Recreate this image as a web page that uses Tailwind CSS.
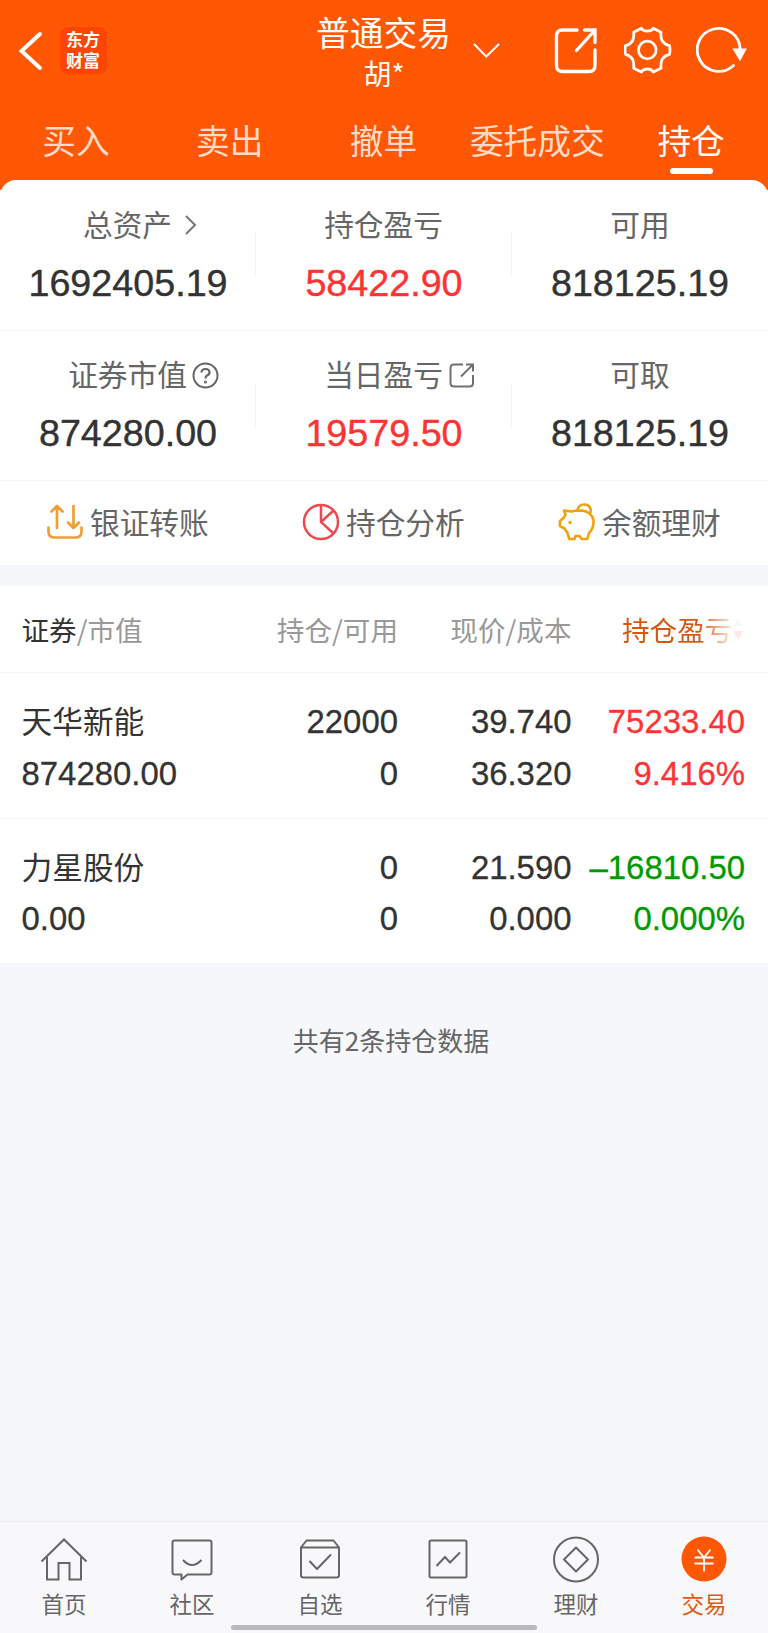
<!DOCTYPE html>
<html lang="zh-CN">
<head>
<meta charset="utf-8">
<title>普通交易</title>
<script src="https://cdn.jsdelivr.net/npm/@tailwindcss/browser@4"></script>
</head>
<body class="w-[768px] h-[1633px] overflow-hidden bg-[#f6f7fa] font-['Noto_Sans_CJK_SC',sans-serif] text-[#333]">
<div class="flex h-[1633px] flex-col">

<header class="h-[190px] shrink-0 bg-[#ff5704] text-white">
  <div class="grid h-[108px] grid-cols-3">
    <div class="flex pt-[27px] pl-[18px]">
      <svg class="mt-[3px] h-11 w-[26px]" viewBox="0 0 26 44" fill="none" stroke="#fff" stroke-width="4" stroke-linecap="round"><path d="M22 4 3.500 21 22 38"/></svg>
      <div class="ml-[15.500px] h-[47px] w-[47px] rounded-lg bg-[#ff4504] pt-[2px] text-center text-[17px] leading-[20.500px] font-bold">东方<br>财富</div>
    </div>
    <div class="relative flex flex-col items-center">
      <span class="mt-[12px] -ml-px text-[33.7px] leading-[40px] whitespace-nowrap">普通交易</span>
      <span class="mt-[1px] text-[28px] leading-[40px]">胡*</span>
      <svg class="absolute top-[41px] left-[216px] h-5 w-7" viewBox="0 0 28 20" fill="none" stroke="#fff" stroke-width="2"><path d="M2 3 14.300 15.500 27 3"/></svg>
    </div>
    <div class="flex pt-[26px] pl-[41px]">
      <svg class="h-12 w-[46px]" viewBox="0 0 46 48" fill="none" stroke="#fff" stroke-width="3.300" stroke-linecap="round"><path d="M24 4H9.500Q3.500 4 3.500 10V39.500Q3.500 45.500 9.500 45.500H36Q42 45.500 42 39.500V24M31.500 4H42V16.500M42 4 23.500 24.500"/></svg>
      <svg class="ml-[25px] h-12 w-12" viewBox="0 0 48 48" fill="none" stroke="#fff" stroke-width="2.800" stroke-linejoin="round"><path d="M17.300 2.300Q19 5.200 23.300 5.200T29.300 2.300L37 6.300Q36.500 11 38 14.500Q40.500 18.500 45.500 19.700Q46.500 24 45.500 28.300Q40.500 29.500 38 33.500Q36.500 37.500 37 42.300L29.300 46Q27.500 43 23.300 43T17.300 46L9.700 42.300Q10.200 37.500 8.700 33.500Q6.500 29.500 1.500 28.300Q.5 24 1.500 19.700Q6.500 18.500 8.700 14.500Q10.200 11 9.700 6.300Z"/><circle cx="23.300" cy="24" r="8.800"/></svg>
      <svg class="ml-6 h-12 w-[52px]" viewBox="0 0 52 48" fill="none" stroke="#fff" stroke-width="2.800" stroke-linecap="round"><path d="M37.500 39.500A21.500 21.500 0 1 1 44.200 23"/><path d="M37.500 23H49.800L44 34Z" fill="#fff" stroke-width="1.200"/></svg>
    </div>
  </div>
  <nav class="-ml-px grid grid-cols-5 text-center text-[33.7px] leading-[63px] whitespace-nowrap text-[#ffdcc8]">
    <span>买入</span><span>卖出</span><span>撤单</span><span>委托成交</span>
    <span class="relative text-white">持仓<i class="absolute bottom-[-3px] left-[56px] h-[6.500px] w-[43px] rounded-full bg-white"></i></span>
  </nav>
</header>

<section class="relative z-10 -mt-[10px] h-[385px] shrink-0 rounded-t-[16px] bg-white text-[29.700px] text-[#666]">
  <div class="grid h-[150px] grid-cols-3 text-center">
    <div class="flex flex-col pt-[24px]">
      <span class="relative -ml-px leading-[40px]">总资产<svg class="absolute top-[10px] left-[184px] h-6 w-4" viewBox="0 0 16 24" fill="none" stroke="#777" stroke-width="2"><path d="M3 2 12 11 3 20"/></svg></span>
      <b class="mt-[19px] font-['Liberation_Sans',sans-serif] text-[37.700px] leading-[40px] font-normal text-[#333] [-webkit-text-stroke:0.4px]">1692405.19</b>
    </div>
    <div class="relative flex flex-col pt-[24px]"><i class="absolute top-[53px] left-[-1px] h-[43px] w-px bg-[#f5f5f7]"></i><i class="absolute top-[53px] right-0 h-[43px] w-px bg-[#f5f5f7]"></i>
      <span class="-ml-px leading-[40px]">持仓盈亏</span>
      <b class="mt-[19px] font-['Liberation_Sans',sans-serif] text-[37.700px] leading-[40px] font-normal text-[#ff3333] [-webkit-text-stroke:0.4px]">58422.90</b>
    </div>
    <div class="flex flex-col pt-[24px]">
      <span class="leading-[40px]">可用</span>
      <b class="mt-[19px] font-['Liberation_Sans',sans-serif] text-[37.700px] leading-[40px] font-normal text-[#333] [-webkit-text-stroke:0.4px]">818125.19</b>
    </div>
  </div>
  <div class="grid h-[150px] grid-cols-3 border-t border-[#f5f5f7] text-center">
    <div class="flex flex-col pt-[23px]">
      <span class="relative -ml-px leading-[40px]">证券市值<svg class="absolute top-[8px] left-[193px] h-[27px] w-[27px]" viewBox="0 0 27 27" fill="none" stroke="#666" stroke-width="2"><circle cx="13.500" cy="13.500" r="12"/><path d="M9.500 10.500Q9.500 7 13.500 7T17.500 10.500Q17.500 12.500 15 13.500Q13.500 14.200 13.500 16.500" stroke-width="2.200"/><circle cx="13.500" cy="20" r=".6"/></svg></span>
      <b class="mt-[19px] font-['Liberation_Sans',sans-serif] text-[37.700px] leading-[40px] font-normal text-[#333] [-webkit-text-stroke:0.4px]">874280.00</b>
    </div>
    <div class="relative flex flex-col pt-[23px]"><i class="absolute top-[52px] left-[-1px] h-[46px] w-px bg-[#f5f5f7]"></i><i class="absolute top-[52px] right-0 h-[46px] w-px bg-[#f5f5f7]"></i>
      <span class="relative -ml-px leading-[40px]">当日盈亏<svg class="absolute top-[8px] left-[193px] h-[27px] w-[27px]" viewBox="0 0 27 27" fill="none" stroke="#707070" stroke-width="2"><path d="M15 2.500H6Q2.500 2.500 2.500 6V21Q2.500 24.500 6 24.500H21.500Q25 24.500 25 21V13M18 2.500H25V9.500M25 2.500 13 14.500"/></svg></span>
      <b class="mt-[19px] font-['Liberation_Sans',sans-serif] text-[37.700px] leading-[40px] font-normal text-[#ff3333] [-webkit-text-stroke:0.4px]">19579.50</b>
    </div>
    <div class="flex flex-col pt-[23px]">
      <span class="leading-[40px]">可取</span>
      <b class="mt-[19px] font-['Liberation_Sans',sans-serif] text-[37.700px] leading-[40px] font-normal text-[#333] [-webkit-text-stroke:0.4px]">818125.19</b>
    </div>
  </div>
  <div class="grid h-[85px] grid-cols-3 border-t border-[#f5f5f7] leading-[82px]">
    <div class="flex pl-[46px]">
      <svg class="mt-[22px] mr-[6px] h-10 w-[38px]" viewBox="0 0 38 40" fill="none" stroke="#eea036" stroke-width="2.700" stroke-linecap="round" stroke-linejoin="round"><path d="M2.500 24.500V28.500Q2.500 34.500 8.500 34.500H29.500Q35.500 34.500 35.500 28.500V24.500M11 25V3M5.500 8.500 11 3 16.500 8.500M27.500 3V25M22 19.500 27.500 25 33 19.500"/></svg><span>银证转账</span>
    </div>
    <div class="flex pl-[46px]">
      <svg class="mt-[22px] mr-[6px] h-10 w-[38px]" viewBox="0 0 38 40" fill="none" stroke="#ec4a52" stroke-width="2.500"><circle cx="19" cy="19" r="17"/><path d="M19 2V19L31 30M19 19 31 8"/></svg><span>持仓分析</span>
    </div>
    <div class="flex pl-[46px]">
      <svg class="mt-[22px] mr-[6px] h-10 w-[38px]" viewBox="0 0 38 40" fill="none" stroke="#f2a20c" stroke-width="2.600" stroke-linejoin="round"><path d="M6 7.500 13.500 8.500Q17 7.500 24 7.500Q33 8.500 35.500 17Q36 25.500 31 30L29.300 36H23.700L21.500 33H17.500L16.500 36H11.300L9.300 29.500L6.500 25.500L2 23V18L6 14.500L7.500 11.500Z"/><path d="M19.500 7.500Q20.500 1.500 26 1.500T32.700 6.500Q33 9 31.500 11.500"/><circle cx="12" cy="19.500" r="1.100" fill="#f2a20c" stroke-width="1.200"/></svg><span>余额理财</span>
    </div>
  </div>
</section>

<main class="mt-[21px] shrink-0 bg-white">
  <div class="grid h-[87px] grid-cols-[225px_173px_173.5px_173.5px] border-b border-[#f5f5f7] text-right text-[27.600px] leading-[86px] whitespace-nowrap text-[#999]">
    <span class="pl-[21.500px] text-left"><span class="text-[#333]">证券</span>/市值</span>
    <span>持仓/可用</span><span>现价/成本</span>
    <div class="flex items-center pl-[50.500px]"><span class="bg-linear-to-r from-[#d9560f] from-70% to-[#fbe7dc] to-100% bg-clip-text text-transparent">持仓盈亏</span>
      <svg class="h-6 w-3 shrink-0" viewBox="0 0 12 24"><path d="M1 9 6 1 11 9Z" fill="#faf7f8"/><path d="M1 14 6 23 11 14Z" fill="#fdebe3"/></svg></div>
  </div>
  <div class="grid h-[145.500px] grid-cols-[225px_173px_173.5px_173.5px] content-start border-b border-[#f5f5f7] pt-[23px] text-right font-['Liberation_Sans',sans-serif] text-[32.900px] leading-[51.500px] whitespace-nowrap [-webkit-text-stroke:0.3px]">
    <span class="h-[51.500px] pl-[21.500px] text-left font-['Noto_Sans_CJK_SC',sans-serif] text-[30.700px] leading-[48px] [-webkit-text-stroke:0]">天华新能</span><span>22000</span><span>39.740</span><span class="text-[#ff3333]">75233.40</span>
    <span class="pl-[21.500px] text-left">874280.00</span><span>0</span><span>36.320</span><span class="text-[#ff3333]">9.416%</span>
  </div>
  <div class="grid h-[144.500px] grid-cols-[225px_173px_173.5px_173.5px] content-start pt-[23px] text-right font-['Liberation_Sans',sans-serif] text-[32.900px] leading-[51.500px] whitespace-nowrap [-webkit-text-stroke:0.3px]">
    <span class="h-[51.500px] pl-[21.500px] text-left font-['Noto_Sans_CJK_SC',sans-serif] text-[30.700px] leading-[48px] [-webkit-text-stroke:0]">力星股份</span><span>0</span><span>21.590</span><span class="text-[#009900]">–16810.50</span>
    <span class="pl-[21.500px] text-left">0.00</span><span>0</span><span>0.000</span><span class="text-[#009900]">0.000%</span>
  </div>
</main>

<p class="mt-[56.500px] pl-[14px] text-center text-[26px] leading-[40px] text-[#666]">共有2条持仓数据</p>

<footer class="relative mt-auto h-[112px] shrink-0 border-t border-[#ededf0] bg-[#f8f8fb] text-[22.500px] text-[#666]">
  <div class="grid grid-cols-6 pt-[12px]">
    <div class="flex flex-col items-center"><svg class="h-[50px] w-[50px]" viewBox="0 0 50 50" fill="none" stroke="#666" stroke-width="2"><path d="M2.500 27.500 25 5.500 47.500 27.500M8 23V45.500H19.500V29H30.500V45.500H42V23"/></svg><span class="mt-[4px] leading-[30px]">首页</span></div>
    <div class="flex flex-col items-center"><svg class="h-[50px] w-[50px]" viewBox="0 0 50 50" fill="none" stroke="#666" stroke-width="2" stroke-linejoin="round"><path d="M7.500 6.500H42.500Q44.500 6.500 44.500 8.500V38.500Q44.500 40.500 42.500 40.500H20.500L14.500 45.500V40.500H7.500Q5.500 40.500 5.500 38.500V8.500Q5.500 6.500 7.500 6.500ZM16 26Q25 36 34.500 26"/></svg><span class="mt-[4px] leading-[30px]">社区</span></div>
    <div class="flex flex-col items-center"><svg class="h-[50px] w-[50px]" viewBox="0 0 50 50" fill="none" stroke="#666" stroke-width="2" stroke-linejoin="round"><path d="M6 13.500 11.500 6.500H38.500L44 13.500V41Q44 43.500 41.500 43.500H8.500Q6 43.500 6 41ZM6 13.500H44M14.500 27 22 35 36 20.500"/></svg><span class="mt-[4px] leading-[30px]">自选</span></div>
    <div class="flex flex-col items-center"><svg class="h-[50px] w-[50px]" viewBox="0 0 50 50" fill="none" stroke="#666" stroke-width="2"><rect x="6.500" y="6.500" width="37" height="37" rx="1.500"/><path d="M13.500 32 22 23 27 28.500 37 18.500"/></svg><span class="mt-[4px] leading-[30px]">行情</span></div>
    <div class="flex flex-col items-center"><svg class="h-[50px] w-[50px]" viewBox="0 0 50 50" fill="none" stroke="#666" stroke-width="2" stroke-linejoin="round"><circle cx="25" cy="25.500" r="22"/><path d="M25 13.500 37 25.500 25 37.500 13 25.500Z"/></svg><span class="mt-[4px] leading-[30px]">理财</span></div>
    <div class="flex flex-col items-center text-[#e05a10]"><svg class="h-[50px] w-[50px]" viewBox="0 0 50 50" fill="none" stroke="#fff" stroke-width="1.800"><circle cx="25" cy="25" r="22.500" fill="#ff5704" stroke="none"/><path d="M18.500 15.500 25 23.500 31.500 15.500M15.500 23.500H34.500M15.500 29.500H34.500M25 23.500V37.500"/></svg><span class="mt-[4px] leading-[30px]">交易</span></div>
  </div>
  <i class="absolute bottom-[3px] left-[231px] h-[5.500px] w-[306px] rounded-full bg-[#b9b9bb]"></i>
</footer>
</div>
</body>
</html>
